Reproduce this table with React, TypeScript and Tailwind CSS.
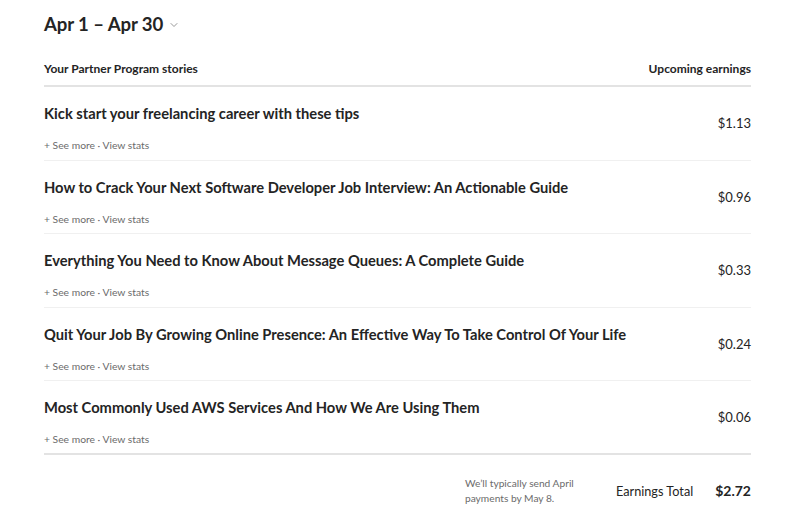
import { ChevronDown } from "lucide-react";

const stories = [
  { title: "Kick start your freelancing career with these tips", amount: "$1.13" },
  { title: "How to Crack Your Next Software Developer Job Interview: An Actionable Guide", amount: "$0.96" },
  { title: "Everything You Need to Know About Message Queues: A Complete Guide", amount: "$0.33" },
  { title: "Quit Your Job By Growing Online Presence: An Effective Way To Take Control Of Your Life", amount: "$0.24" },
  { title: "Most Commonly Used AWS Services And How We Are Using Them", amount: "$0.06" },
];

export default function App() {
  return (
    <div className="min-h-[507px] bg-white pl-[44px] pr-[49px] pt-[10px] text-[#242424] font-['Lato',sans-serif]">
      {/* HEADER */}
      <div className="flex items-center gap-[5px]">
        <h1 className="text-[18.6px] font-bold leading-[28px] tracking-[-0.1px]">Apr 1 – Apr 30</h1>
        <ChevronDown className="mt-[2px] h-[12px] w-[12px] text-[#757575]" strokeWidth={1.5} />
      </div>

      <div className="mt-[23px] flex items-center justify-between border-b-2 border-[#e3e3e3] pb-[8px] text-[12px] font-bold leading-[16px]">
        <span>Your Partner Program stories</span>
        <span>Upcoming earnings</span>
      </div>

      {/* ROWS */}
      {stories.map((story, i) => (
        <div
          key={story.title}
          className={
            i === stories.length - 1
              ? "flex h-[73.5px] items-center justify-between border-b-2 border-[#e3e3e3]"
              : "flex h-[73.5px] items-center justify-between border-b border-[#f0f0f0]"
          }
        >
          <div className="self-start pt-[16px]">
            <h2 className="text-[14.7px] font-bold leading-[20px]">{story.title}</h2>
            <p className="mt-[15px] text-[10.3px] leading-[14px] text-[#6b6b6b]">+ See more · View stats</p>
          </div>
          <span className="text-[13px] leading-[16px]">{story.amount}</span>
        </div>
      ))}

      {/* FOOTER */}
      <div className="mt-[21px] flex items-center justify-end">
        <p className="w-[112px] text-[10.2px] leading-[15px] text-[#6b6b6b]">
          We’ll typically send April payments by May 8.
        </p>
        <span className="ml-[39px] text-[12.7px] leading-[20px]">Earnings Total</span>
        <span className="ml-[22px] text-[14px] font-bold leading-[20px]">$2.72</span>
      </div>
    </div>
  );
}
